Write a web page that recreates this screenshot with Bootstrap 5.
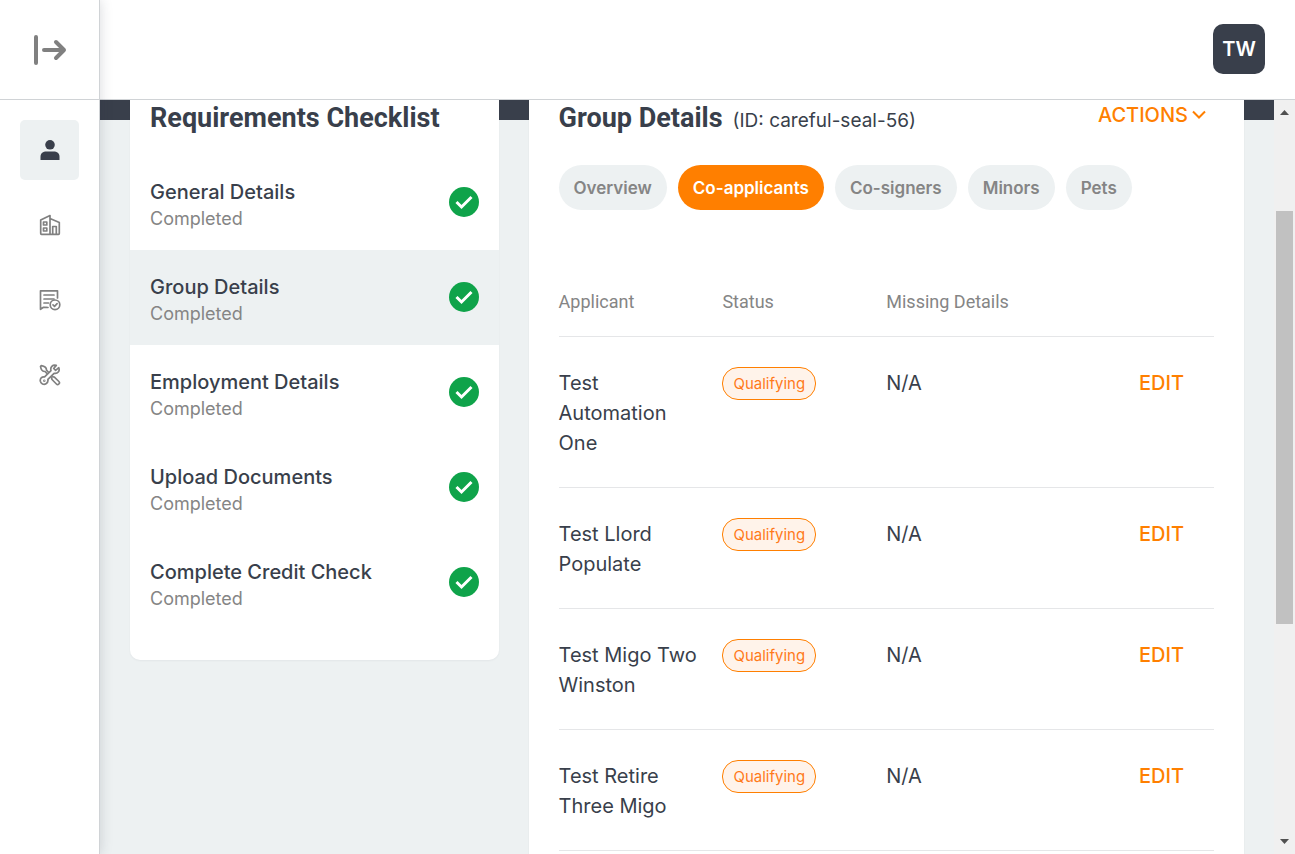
<!DOCTYPE html>
<html lang="en">
<head>
<meta charset="utf-8">
<meta name="viewport" content="width=device-width, initial-scale=1">
<title>Group Details</title>
<link href="https://cdn.jsdelivr.net/npm/bootstrap@5.3.0/dist/css/bootstrap.min.css" rel="stylesheet">
<style>
:root { --ink: #393f4b; --muted: #858585; --mist: #edf1f2; --orange: #ff7f00; --edge: #d0d3d6; }
body { font-family: Inter, "Liberation Sans", sans-serif; font-size: 20px; line-height: 30px; color: var(--ink); }
button { font-family: inherit; }
.side-rail { width: 100px; border-right: 1px solid var(--edge); box-shadow: 0 0 12px rgba(40, 45, 60, .18); z-index: 2; }
.rail-toggle { height: 100px; border: 0; border-bottom: 1px solid var(--edge); background: none; color: #808080; }
.rail-links { gap: 15px; padding-top: 20px; }
.rail-link { width: 59px; height: 60px; color: #808080; border-radius: 5px; }
.rail-link.active { background: var(--mist); color: var(--ink); }
.work-column { min-width: 0; }
.top-bar { height: 100px; border-bottom: 1px solid var(--edge); padding: 0 30px 2px; }
.avatar { width: 52px; height: 50px; border: 0; border-radius: 10px; background: var(--ink); font-weight: 600; }
.work-area { background: linear-gradient(var(--ink) 20px, var(--mist) 20px); min-height: 0; }
.panels { display: grid; grid-template-columns: 34fr 66fr; gap: 30px; padding: 0 30px; min-height: 0; align-items: start; }
.panel { background: #fff; box-shadow: 0 1px 2px rgba(40, 45, 60, .05); }
.checklist { border-radius: 0 0 10px 10px; padding-bottom: 30px; }
.panel-title { font-family: Roboto, sans-serif; font-weight: 700; font-size: 27px; line-height: 36px; }
.checklist .panel-title { padding: 0 20px 19px; }
.step { padding: 19px 20px 21px; height: 95px; color: var(--ink); }
.step:hover { color: var(--ink); }
.step.active { background: var(--mist); }
.step-text { padding-top: 4px; }
.step-name { font-weight: 500; font-size: 20px; line-height: 28px; }
.step-state { font-size: 18px; line-height: 26px; color: var(--muted); }
.details { padding: 0 30px 90px; }
.group-id { font-size: 19px; padding-left: 10px; }
.accent-btn { border: 0; background: none; padding: 0; color: var(--orange); font-weight: 500; font-size: 20px; line-height: 30px; }
.actions-btn { padding-right: 8px; }
.tab-row { gap: 11px; padding: 29px 0 77px; }
.tab-pill { border: 0; border-radius: 23px; height: 45px; padding: 0 15px; background: var(--mist); color: var(--muted); font-weight: 600; font-size: 17px; }
.tab-pill.active { background: var(--orange); color: #fff; }
.applicants { table-layout: fixed; }
.applicants th { font-family: Roboto, sans-serif; font-weight: 400; font-size: 18px; color: var(--muted); padding: 0 0 19px; }
.applicants td { padding: 31px 20px 29px 0; vertical-align: top; }
.applicants td:last-child { padding-right: 30px; }
.applicants tr { border-bottom: 1px solid #e5e6e8; }
.status-chip { display: inline-block; border: 1px solid var(--orange); border-radius: 16px; background: #fff3ea; color: #ff7a1a; font-size: 15px; line-height: 31px; height: 33px; padding: 0 10px; vertical-align: top; margin-top: -1px; }
.scroll-rail { width: 21px; background: #f0f0f0; padding-left: 2px; }
.scroll-end { height: 24px; color: #505050; }
.scroll-thumb { width: 17px; background: #c1c1c1; flex: 413; }
.before-thumb { flex: 87; }
.after-thumb { flex: 206; }
</style>
</head>
<body class="vh-100 overflow-hidden d-flex bg-white">
<nav class="side-rail bg-white flex-shrink-0 d-flex flex-column align-items-center position-relative" aria-label="Main">
  <button class="rail-toggle w-100 p-0 flex-shrink-0 d-flex align-items-center justify-content-center" aria-label="Expand menu">
    <svg width="34" height="30" viewBox="0 0 34 30" fill="none" stroke="currentColor" stroke-width="4" stroke-linecap="round" stroke-linejoin="round"><path d="M3 2v26M11 15h20M23 7l8 8-8 8"/></svg>
  </button>
  <div class="rail-links d-flex flex-column">
    <a class="rail-link active d-flex align-items-center justify-content-center" href="#" aria-label="Applicant">
      <svg width="20" height="22" viewBox="0 0 20 22" fill="currentColor"><circle cx="10" cy="5.800" r="4.800"/><path d="M.5 21v-3c0-4 2.500-5.500 6-5.500h7c3.500 0 6 1.500 6 5.500v3z"/></svg>
    </a>
    <a class="rail-link d-flex align-items-center justify-content-center" href="#" aria-label="Property">
      <svg width="22" height="22" viewBox="0 0 22 22" fill="none" stroke="currentColor" stroke-width="1.700" stroke-linejoin="round"><path d="M11 20.300V1.500L1.700 6v13.500q0 .8.800.8h17q.8 0 .8-.8V8.500L11 4.500M4.500 8h3.300v3H4.500zM4.500 14h3.300v3H4.500zM13.700 20v-7.500h3.600V20"/></svg>
    </a>
    <a class="rail-link d-flex align-items-center justify-content-center" href="#" aria-label="Documents">
      <svg width="22" height="22" viewBox="0 0 22 22" fill="none" stroke="currentColor" stroke-width="1.700" stroke-linejoin="round" stroke-linecap="round"><path d="M18.500 9V1.800h-17v18.500l3-2h1.700M5 6h10M5 10h10M5 14h4.500M7 18.300l2 .2"/><circle cx="16" cy="15.800" r="4.800"/><path d="M14 15.900l1.500 1.400 2.600-2.700"/></svg>
    </a>
    <a class="rail-link d-flex align-items-center justify-content-center" href="#" aria-label="Maintenance">
      <svg width="22" height="22" viewBox="0 0 22 22" fill="none" stroke="currentColor" stroke-width="1.700" stroke-linejoin="round" stroke-linecap="round"><path d="M19.800 3.700l-3.200 2.600-1.900-1.800 2.600-3.100c-3.800-.9-6.300 1.800-5.300 5.300l-6.400 6.200c-2.900-.4-4.700 1.700-4.300 4.300.5 2.500 3.400 3.900 5.700 2.600 1.800-1 2.200-2.500 1.900-4.400l6.200-6.100c3.600.8 6-2.200 4.700-5.600z"/><path d="M9.300 8L7.500 6.200c.1-2.200-1.200-3.900-5.200-4.600L1.500 2.500c.5 3.800 2.200 5 4.500 5l1.900 1.900M13.800 12.700l1.600.4 4.500 4.400c1.600 1.700-.9 4.100-2.500 2.500L13 15.500l-.4-1.600"/><circle cx="5.300" cy="16.700" r=".4"/></svg>
    </a>
  </div>
</nav>
<div class="work-column flex-grow-1 d-flex flex-column">
  <header class="top-bar bg-white flex-shrink-0 d-flex align-items-center justify-content-end">
    <button class="avatar p-0 text-white fs-5">TW</button>
  </header>
  <div class="work-area flex-grow-1 d-flex overflow-hidden">
    <main class="panels flex-grow-1">
      <section class="panel checklist">
        <h2 class="panel-title mb-0">Requirements Checklist</h2>
        <div>
          <a href="#" class="step d-flex justify-content-between text-decoration-none"><span class="step-text"><span class="step-name d-block">General Details</span><span class="step-state d-block">Completed</span></span><svg class="align-self-center" width="30" height="30" viewBox="0 0 30 30"><circle cx="15" cy="15" r="15" fill="#0fa34a"/><path d="M7.500 15l5 5L22.500 10" fill="none" stroke="#fff" stroke-width="3"/></svg></a>
          <a href="#" class="step active d-flex justify-content-between text-decoration-none" aria-current="step"><span class="step-text"><span class="step-name d-block">Group Details</span><span class="step-state d-block">Completed</span></span><svg class="align-self-center" width="30" height="30" viewBox="0 0 30 30"><circle cx="15" cy="15" r="15" fill="#0fa34a"/><path d="M7.500 15l5 5L22.500 10" fill="none" stroke="#fff" stroke-width="3"/></svg></a>
          <a href="#" class="step d-flex justify-content-between text-decoration-none"><span class="step-text"><span class="step-name d-block">Employment Details</span><span class="step-state d-block">Completed</span></span><svg class="align-self-center" width="30" height="30" viewBox="0 0 30 30"><circle cx="15" cy="15" r="15" fill="#0fa34a"/><path d="M7.500 15l5 5L22.500 10" fill="none" stroke="#fff" stroke-width="3"/></svg></a>
          <a href="#" class="step d-flex justify-content-between text-decoration-none"><span class="step-text"><span class="step-name d-block">Upload Documents</span><span class="step-state d-block">Completed</span></span><svg class="align-self-center" width="30" height="30" viewBox="0 0 30 30"><circle cx="15" cy="15" r="15" fill="#0fa34a"/><path d="M7.500 15l5 5L22.500 10" fill="none" stroke="#fff" stroke-width="3"/></svg></a>
          <a href="#" class="step d-flex justify-content-between text-decoration-none"><span class="step-text"><span class="step-name d-block">Complete Credit Check</span><span class="step-state d-block">Completed</span></span><svg class="align-self-center" width="30" height="30" viewBox="0 0 30 30"><circle cx="15" cy="15" r="15" fill="#0fa34a"/><path d="M7.500 15l5 5L22.500 10" fill="none" stroke="#fff" stroke-width="3"/></svg></a>
        </div>
      </section>
      <section class="panel details">
        <div class="d-flex align-items-start justify-content-between">
          <div class="d-flex align-items-baseline">
            <h2 class="panel-title mb-0">Group Details</h2>
            <span class="group-id">(ID: careful-seal-56)</span>
          </div>
          <button class="accent-btn actions-btn d-flex align-items-center gap-1">ACTIONS<svg width="14" height="10" viewBox="0 0 14 10" fill="none" stroke="currentColor" stroke-width="2"><path d="M1 1.500l6 6 6-6"/></svg></button>
        </div>
        <div class="tab-row d-flex">
          <button class="tab-pill">Overview</button>
          <button class="tab-pill active">Co-applicants</button>
          <button class="tab-pill">Co-signers</button>
          <button class="tab-pill">Minors</button>
          <button class="tab-pill">Pets</button>
        </div>
        <table class="applicants w-100">
          <thead><tr><th scope="col">Applicant</th><th scope="col">Status</th><th scope="col">Missing Details</th><th scope="col" aria-label="Edit"></th></tr></thead>
          <tbody>
            <tr><td>Test Automation One</td><td><span class="status-chip">Qualifying</span></td><td>N/A</td><td class="text-end"><button class="accent-btn">EDIT</button></td></tr>
            <tr><td>Test Llord Populate</td><td><span class="status-chip">Qualifying</span></td><td>N/A</td><td class="text-end"><button class="accent-btn">EDIT</button></td></tr>
            <tr><td>Test Migo Two Winston</td><td><span class="status-chip">Qualifying</span></td><td>N/A</td><td class="text-end"><button class="accent-btn">EDIT</button></td></tr>
            <tr><td>Test Retire Three Migo</td><td><span class="status-chip">Qualifying</span></td><td>N/A</td><td class="text-end"><button class="accent-btn">EDIT</button></td></tr>
          </tbody>
        </table>
      </section>
    </main>
    <div class="scroll-rail flex-shrink-0 d-flex flex-column" aria-hidden="true">
      <div class="scroll-end d-flex align-items-center"><svg width="17" height="8" viewBox="0 0 17 8" fill="currentColor"><path d="M4 7l4.500-5L13 7z"/></svg></div>
      <div class="before-thumb"></div><div class="scroll-thumb"></div><div class="after-thumb"></div>
      <div class="scroll-end d-flex align-items-center"><svg width="17" height="8" viewBox="0 0 17 8" fill="currentColor"><path d="M4 1l4.500 5L13 1z"/></svg></div>
    </div>
  </div>
</div>
<script src="https://cdn.jsdelivr.net/npm/bootstrap@5.3.0/dist/js/bootstrap.bundle.min.js"></script>
</body>
</html>
